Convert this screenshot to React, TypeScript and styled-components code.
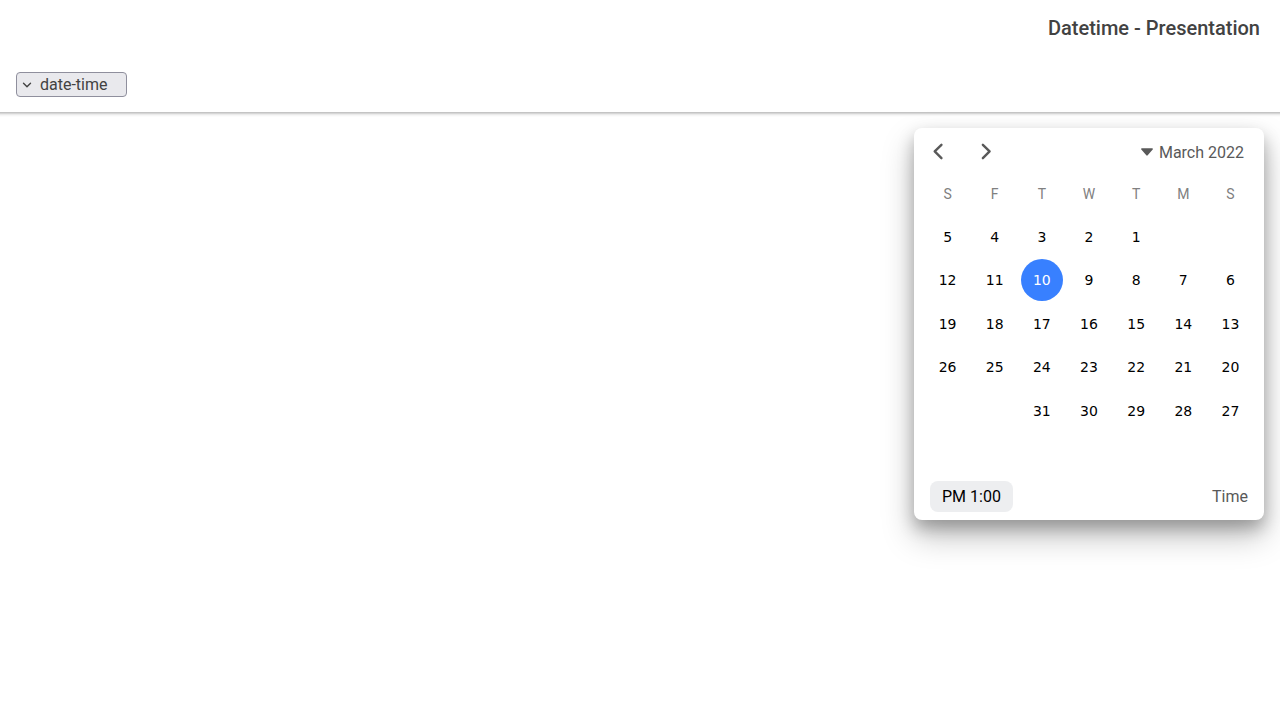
import React, { useState } from "react";
import styled, { createGlobalStyle } from "styled-components";

const GlobalStyle = createGlobalStyle`
  *, *::before, *::after { box-sizing: border-box; }
  body { margin: 0; background: #fff; font-family: Roboto, "Liberation Sans", sans-serif; }
  button, select { font: inherit; color: inherit; border: 0; margin: 0; padding: 0; background: none; cursor: pointer; }
`;

const Page = styled.div`
  min-height: 100vh;
  display: flex;
  flex-direction: column;
`;

const Header = styled.header`
  position: relative;

  &::after {
    content: "";
    position: absolute;
    top: 100%;
    left: 0;
    right: 0;
    height: 5px;
    background: linear-gradient(#c4c4c4 1px, #d6d6d6 1px, #d6d6d6 2px, #ebebeb 2px, #ebebeb 3px, #f6f6f6 3px, #f6f6f6 4px, #fcfcfc 4px);
  }
`;

const TitleBar = styled.div`
  min-height: 56px;
  padding: 0 20px;
  display: flex;
  align-items: center;
`;

const Title = styled.h1`
  margin: 0;
  font-size: 20px;
  font-weight: 500;
  line-height: 24px;
  color: #424242;
`;

const OptionsBar = styled.div`
  min-height: 56px;
  padding: 0 16px;
  display: flex;
  align-items: center;
  justify-content: flex-end;
`;

const PickerLabel = styled.label`
  position: relative;
  display: flex;
`;

const PickerChevron = styled.svg`
  position: absolute;
  left: 6px;
  top: 8px;
  pointer-events: none;
`;

const PresentationSelect = styled.select`
  appearance: none;
  direction: ltr;
  width: 111px;
  height: 25px;
  padding: 2px 0 0 23px;
  border: 1px solid #8f8f9d;
  border-radius: 4px;
  background: #e9e9ed;
  color: #424242;
  font-size: 16px;
  line-height: 20px;
`;

const Content = styled.main`
  padding: 16px;
  display: flex;
`;

const Calendar = styled.section`
  width: 100%;
  max-width: 350px;
  border-radius: 8px;
  background: #fff;
  box-shadow: 0 16px 32px rgba(0, 0, 0, 0.25), 0 8px 16px rgba(0, 0, 0, 0.25);
`;

const CalendarHeader = styled.div`
  height: 48px;
  padding: 0 20px;
  display: flex;
  align-items: center;
  justify-content: space-between;
`;

const MonthButton = styled.button`
  display: flex;
  align-items: center;
  gap: 6px;
  font-size: 16px;
  line-height: 20px;
  color: #595959;
`;

const MonthName = styled.span`
  padding-top: 2px;
`;

const MonthNav = styled.div`
  display: flex;
  direction: ltr;
  margin-left: -20px;
`;

const NavButton = styled.button`
  width: 48px;
  height: 48px;
  display: flex;
  align-items: center;
  justify-content: center;
  color: #595959;
`;

const MonthGrid = styled.table`
  width: 100%;
  display: block;
  padding: 0 10px;
`;

const WeekHead = styled.thead`
  display: block;
  padding: 8px 0 11px;
`;

const WeekBody = styled.tbody`
  display: grid;
  grid-template-rows: repeat(6, 1fr);
  height: 261px;
`;

const Week = styled.tr`
  display: grid;
  grid-template-columns: repeat(7, 1fr);
  align-items: center;
`;

const WeekdayName = styled.th`
  padding: 0;
  font-size: 14px;
  font-weight: 400;
  line-height: 20px;
  text-align: center;
  color: #808080;
`;

const DayCell = styled.td`
  padding: 0;
  display: flex;
  justify-content: center;
`;

const DayButton = styled.button<{ $selected: boolean }>`
  width: 42px;
  height: 42px;
  border-radius: 50%;
  font-family: "DejaVu Sans", sans-serif;
  font-size: 14px;
  line-height: 20px;
  color: ${(p) => (p.$selected ? "#fff" : "#000")};
  background: ${(p) => (p.$selected ? "#3880ff" : "transparent")};
`;

const TimeRow = styled.div`
  padding: 5px 16px 8px;
  display: flex;
  align-items: center;
  justify-content: space-between;
  font-size: 16px;
  line-height: 19px;
  color: #595959;
`;

const TimeButton = styled.button`
  direction: ltr;
  padding: 6px 12px;
  border-radius: 8px;
  background: #edeef0;
  color: #000;
`;

const weekdays = ["S", "M", "T", "W", "T", "F", "S"];
const firstWeekday = 2;
const daysInMonth = 31;

const weeks = Array.from({ length: 6 }, (_, week) =>
  weekdays.map((_, column) => {
    const day = week * 7 + column - firstWeekday + 1;
    return day >= 1 && day <= daysInMonth ? day : null;
  })
);

export default function App() {
  const [selected, setSelected] = useState(10);

  return (
    <Page dir="rtl">
      <GlobalStyle />
      <Header>
        <TitleBar>
          <Title>Datetime - Presentation</Title>
        </TitleBar>
        <OptionsBar>
          <PickerLabel>
            <PresentationSelect aria-label="Presentation" defaultValue="date-time">
              <option value="date-time">date-time</option>
            </PresentationSelect>
            <PickerChevron width="10" height="10" viewBox="0 0 10 10" fill="none" stroke="#424242" strokeWidth="1.4" strokeLinecap="round" strokeLinejoin="round">
              <path d="M1.5 3.2 5 6.7l3.5-3.5" />
            </PickerChevron>
          </PickerLabel>
        </OptionsBar>
      </Header>
      <Content>
        <Calendar aria-label="Date and time">
          <CalendarHeader>
            <MonthButton>
              <MonthName>March 2022</MonthName>
              <svg width="12" height="8" viewBox="0 0 12 8" fill="currentColor">
                <path d="M.9.3h10.2c.8 0 1.1.7.6 1.2L6.7 7.2a.9.9 0 0 1-1.4 0L.3 1.5C-.2 1 .1.3.9.3z" />
              </svg>
            </MonthButton>
            <MonthNav>
              <NavButton aria-label="Next month">
                <svg width="20" height="20" viewBox="0 0 512 512" fill="none" stroke="currentColor" strokeWidth="62" strokeLinecap="round" strokeLinejoin="round">
                  <path d="M344 72 172 242l172 170" />
                </svg>
              </NavButton>
              <NavButton aria-label="Previous month">
                <svg width="20" height="20" viewBox="0 0 512 512" fill="none" stroke="currentColor" strokeWidth="62" strokeLinecap="round" strokeLinejoin="round">
                  <path d="m176 72 172 170-172 170" />
                </svg>
              </NavButton>
            </MonthNav>
          </CalendarHeader>
          <MonthGrid>
            <WeekHead>
              <Week>
                {weekdays.map((name, i) => (
                  <WeekdayName key={i} scope="col">{name}</WeekdayName>
                ))}
              </Week>
            </WeekHead>
            <WeekBody>
              {weeks.map((days, week) => (
                <Week key={week}>
                  {days.map((day, column) => (
                    <DayCell key={column}>
                      {day !== null && (
                        <DayButton $selected={day === selected} aria-pressed={day === selected} onClick={() => setSelected(day)}>
                          {day}
                        </DayButton>
                      )}
                    </DayCell>
                  ))}
                </Week>
              ))}
            </WeekBody>
          </MonthGrid>
          <TimeRow>
            <span>Time</span>
            <TimeButton>PM 1:00</TimeButton>
          </TimeRow>
        </Calendar>
      </Content>
    </Page>
  );
}
